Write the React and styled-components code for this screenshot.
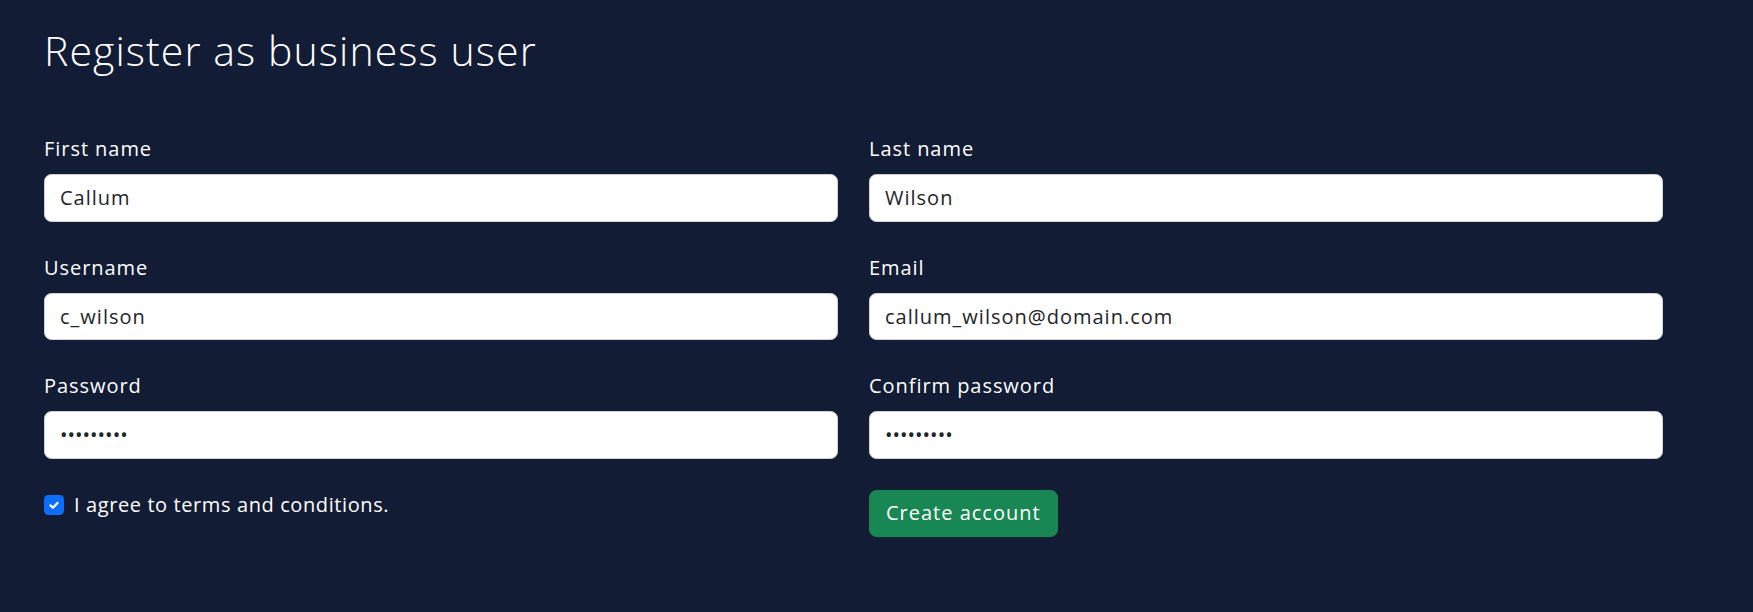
import React from "react"
import styled, { createGlobalStyle } from "styled-components"

const GlobalStyle = createGlobalStyle`
  html, body {
    margin: 0;
    padding: 0;
    background-color: #121c35;
  }
  body {
    font-family: "Open Sans", "Noto Sans", sans-serif;
    color: #ffffff;
  }
  * {
    box-sizing: border-box;
  }
`

const Page = styled.main`
  min-height: 612px;
  padding: 20px 44px 40px;
`

const Title = styled.h1`
  margin: 0 0 54px;
  font-size: 41px;
  font-weight: 300;
  line-height: 60px;
  letter-spacing: 1.1px;
`

const Form = styled.form`
  display: grid;
  grid-template-columns: 794px 794px;
  column-gap: 31px;
  row-gap: 31px;
`

const Field = styled.div`
  display: flex;
  flex-direction: column;
  gap: 10px;
`

const Label = styled.label`
  font-size: 20px;
  line-height: 30px;
  letter-spacing: 0.95px;
`

const Input = styled.input`
  height: 47.5px;
  padding: 7.5px 15px;
  border: 1.25px solid #ced4da;
  border-radius: 7.5px;
  background: #ffffff;
  color: #212529;
  font-family: inherit;
  font-size: 20px;
  line-height: 30px;
  letter-spacing: ${(props) => (props.type === "password" ? "0" : "1px")};
  outline: none;
`

const CheckRow = styled.label`
  display: flex;
  align-items: flex-start;
  gap: 10px;
  font-size: 20px;
  line-height: 30px;
  letter-spacing: 0.6px;
`

const CheckBox = styled.span`
  display: flex;
  align-items: center;
  justify-content: center;
  flex: none;
  width: 20px;
  height: 20px;
  margin-top: 5px;
  border-radius: 4.5px;
  background-color: ${(props) => (props.checked ? "#0d6efd" : "#ffffff")};
`

const ButtonCell = styled.div`
  display: flex;
  align-items: flex-start;
`

const SubmitBtn = styled.button`
  padding: 7.5px 16px;
  border: 1.25px solid #198754;
  border-radius: 7.5px;
  background-color: #198754;
  color: #ffffff;
  font-family: inherit;
  font-size: 20px;
  line-height: 30px;
  letter-spacing: 1px;
  cursor: pointer;
`

const fields = [
  { id: "first", label: "First name", type: "text", value: "Callum" },
  { id: "last", label: "Last name", type: "text", value: "Wilson" },
  { id: "username", label: "Username", type: "text", value: "c_wilson" },
  { id: "email", label: "Email", type: "email", value: "callum_wilson@domain.com" },
  { id: "password", label: "Password", type: "password", value: "123456789" },
  { id: "confirm", label: "Confirm password", type: "password", value: "123456789" },
]

const App = () => (
  <>
    <GlobalStyle />
    <Page>
      <Title>Register as business user</Title>
      <Form onSubmit={(e) => e.preventDefault()}>
        {fields.map((f) => (
          <Field key={f.id}>
            <Label htmlFor={f.id}>{f.label}</Label>
            <Input id={f.id} type={f.type} defaultValue={f.value} />
          </Field>
        ))}
        <CheckRow>
          <CheckBox checked>
            <svg width="14" height="14" viewBox="0 0 20 20">
              <path
                d="M5 10.5l3.5 3.5l6.5-7"
                fill="none"
                stroke="#ffffff"
                strokeWidth="3.2"
                strokeLinecap="round"
                strokeLinejoin="round"
              />
            </svg>
          </CheckBox>
          I agree to terms and conditions.
        </CheckRow>
        <ButtonCell>
          <SubmitBtn type="submit">Create account</SubmitBtn>
        </ButtonCell>
      </Form>
    </Page>
  </>
)

export default App
